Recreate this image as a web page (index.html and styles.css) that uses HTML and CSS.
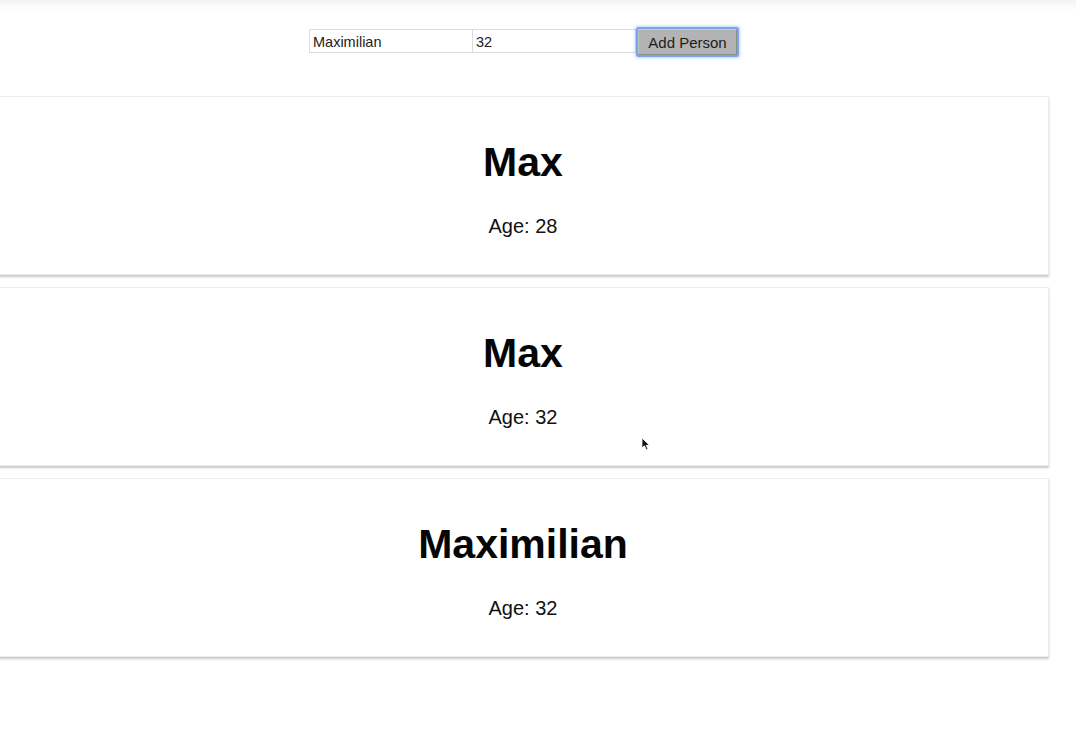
FILE: index.html
```html
<!DOCTYPE html>
<html>
<head>
<meta charset="utf-8">
<link rel="stylesheet" href="styles.css">
</head>
<body>
<div class="app">
  <form class="add-form">
    <input class="field" type="text" value="Maximilian">
    <input class="field" type="text" value="32">
    <button class="add-btn" type="button">Add Person</button>
  </form>
  <div class="people">
    <div class="person">
      <h1 class="person-name">Max</h1>
      <p class="person-age">Age: 28</p>
    </div>
    <div class="person">
      <h1 class="person-name">Max</h1>
      <p class="person-age">Age: 32</p>
      <svg class="cursor" width="9" height="14" viewBox="0 0 9 14"><path d="M1 1 L1 11 L3.5 8.8 L5.4 13 L7 12.3 L5.2 8.3 L8.4 8.3 Z" fill="#111" stroke="#fff" stroke-width="0.8"/></svg>
    </div>
    <div class="person">
      <h1 class="person-name">Maximilian</h1>
      <p class="person-age">Age: 32</p>
    </div>
  </div>
</div>
</body>
</html>
```

FILE: styles.css
```css
html, body {
  margin: 0;
  padding: 0;
}
body {
  background: linear-gradient(to bottom, #f2f2f2 0, #fbfbfb 6px, #ffffff 12px) no-repeat #fff;
  font-family: "Liberation Sans", Arial, sans-serif;
  color: #000;
  width: 1076px;
  height: 740px;
  overflow: hidden;
}
.app {
  padding-top: 29px;
  width: 1052px;
  margin-left: -3px;
}
.add-form {
  display: flex;
  justify-content: center;
  align-items: flex-start;
  margin: 0;
  height: 67px;
}
.field {
  box-sizing: border-box;
  width: 164px;
  height: 24px;
  border: 1px solid #dcdcdc;
  border-radius: 0;
  padding: 1px 3px 0;
  margin: 0;
  font-family: "Liberation Sans", Arial, sans-serif;
  font-size: 14.5px;
  color: #222;
  background: #fff;
  outline: none;
}
.field + .field {
  width: 163px;
  border-left: none;
}
.add-btn {
  box-sizing: border-box;
  margin: 0 0 0 2px;
  width: 99px;
  height: 26px;
  background: #b3b3b3;
  border: 1px solid #8d8d8d;
  border-top-color: #c8c8c8;
  border-left-color: #c0c0c0;
  border-radius: 1px;
  font-family: "Liberation Sans", Arial, sans-serif;
  font-size: 15px;
  color: #1c1c1c;
  padding: 0;
  box-shadow: 0 0 0 2px #7aa6e6, 0 0 3px 3px rgba(110, 160, 235, 0.45);
}
.people {
  display: flex;
  flex-direction: column;
  gap: 12px;
}
.person {
  position: relative;
  box-sizing: border-box;
  height: 179px;
  border: 1px solid #ececec;
  box-shadow: 0 2px 2px #c9c9c9;
  padding: 41px 0 0;
  text-align: center;
  background: #fff;
}
.person-name {
  margin: 0 0 28px;
  font-size: 41px;
  line-height: 48px;
  font-weight: bold;
  color: #050505;
}
.person-age {
  margin: 0;
  font-size: 20px;
  line-height: 24px;
  color: #111;
}
.cursor {
  position: absolute;
  left: 643px;
  top: 149px;
  filter: blur(0.5px);
}
```
